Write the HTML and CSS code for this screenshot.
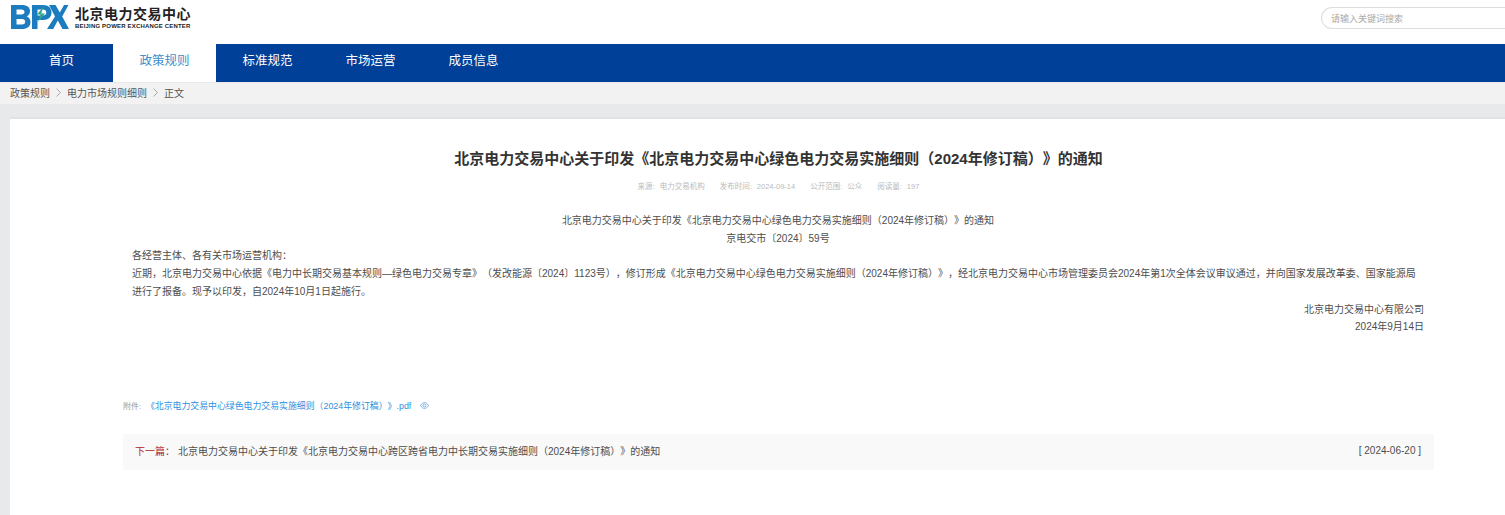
FILE: index.html
```html
<!DOCTYPE html>
<html lang="zh">
<head>
<meta charset="utf-8">
<title>北京电力交易中心</title>
<link rel="stylesheet" href="styles.css">
</head>
<body>
<header class="top">
  <div class="logo">
    <svg class="mark" width="59" height="24" viewBox="0 0 59 24">
      <path fill="#1b7cc0" fill-rule="evenodd" d="M1 0h11c5 0 8 2.300 8 6 0 2.400-1.100 4.300-3.300 5.300C19 12.300 20.500 14.500 20.500 17c0 4.400-3.500 7-8.500 7H1zM6.500 4.500v5h5c1.800 0 3-.9 3-2.500s-1.200-2.500-3-2.500zM6.500 14v5.500H12c2 0 3.200-1 3.200-2.800S14 14 12 14z"/>
      <path fill="#1b7cc0" fill-rule="evenodd" d="M22 0h11c5.500 0 8.500 3 8.500 7.500S38.500 15 33 15h-5.500v9H22zM27.500 4.500v6H33c2.200 0 3.300-1.200 3.300-3s-1.100-3-3.300-3z"/>
      <path fill="#2fa88a" d="M33.500 1.500l-6.500 8h3.500L28 17l7-8.500h-3.800z"/>
      <path fill="#1b7cc0" d="M39 0h6.500l4.300 7.500L54 0h4.500l-6.300 11.500L59 24h-6.500l-4.700-8.500-4.600 8.500H37l8-12.500z"/>
    </svg>
    <div class="brand">
      <div class="brand-cn">北京电力交易中心</div>
      <div class="brand-en">BEIJING POWER EXCHANGE CENTER</div>
    </div>
  </div>
  <div class="search">请输入关键词搜索</div>
</header>
<nav class="nav">
  <a class="nav-item">首页</a>
  <a class="nav-item active">政策规则</a>
  <a class="nav-item">标准规范</a>
  <a class="nav-item">市场运营</a>
  <a class="nav-item">成员信息</a>
</nav>
<div class="crumbs">
  <span>政策规则</span>
  <svg class="sep" width="5" height="9" viewBox="0 0 5 9"><path fill="none" stroke="#aaa" d="M.5.5l4 4-4 4"/></svg>
  <span>电力市场规则细则</span>
  <svg class="sep" width="5" height="9" viewBox="0 0 5 9"><path fill="none" stroke="#aaa" d="M.5.5l4 4-4 4"/></svg>
  <span>正文</span>
</div>
<main class="panel">
  <h1 class="title">北京电力交易中心关于印发《北京电力交易中心绿色电力交易实施细则（2024年修订稿）》的通知</h1>
  <div class="meta">
    <span class="meta-item"><span>来源:</span><span>电力交易机构</span></span>
    <span class="meta-item"><span>发布时间:</span><span>2024-09-14</span></span>
    <span class="meta-item"><span>公开范围:</span><span>公众</span></span>
    <span class="meta-item"><span>阅读量:</span><span>197</span></span>
  </div>
  <article class="body">
    <p class="center">北京电力交易中心关于印发《北京电力交易中心绿色电力交易实施细则（2024年修订稿）》的通知</p>
    <p class="center">京电交市〔2024〕59号</p>
    <p>各经营主体、各有关市场运营机构：</p>
    <p>近期，北京电力交易中心依据《电力中长期交易基本规则—绿色电力交易专章》（发改能源〔2024〕1123号），修订形成《北京电力交易中心绿色电力交易实施细则（2024年修订稿）》，经北京电力交易中心市场管理委员会2024年第1次全体会议审议通过，并向国家发展改革委、国家能源局进行了报备。现予以印发，自2024年10月1日起施行。</p>
    <p class="right">北京电力交易中心有限公司</p>
    <p class="right">2024年9月14日</p>
  </article>
  <div class="attach">
    <span class="attach-label">附件:</span>
    <a class="attach-link">《北京电力交易中心绿色电力交易实施细则（2024年修订稿）》.pdf</a>
    <svg class="eye" width="9" height="7" viewBox="0 0 9 7"><path fill="none" stroke="#5a9fd8" stroke-width=".8" d="M.5 3.500C2 1.200 3.200.6 4.500.6S7 1.200 8.500 3.500C7 5.800 5.800 6.400 4.500 6.400S2 5.800.5 3.500z"/><circle cx="4.500" cy="3.500" r="1.400" fill="none" stroke="#5a9fd8" stroke-width=".8"/></svg>
  </div>
  <div class="next">
    <span class="next-label">下一篇：</span>
    <a class="next-link">北京电力交易中心关于印发《北京电力交易中心跨区跨省电力中长期交易实施细则（2024年修订稿）》的通知</a>
    <span class="next-date">[ 2024-06-20 ]</span>
  </div>
</main>
</body>
</html>
```

FILE: styles.css
```css
* { box-sizing: border-box; }
html, body { margin: 0; height: 100%; }
body {
  background: #e7e9eb;
  color: #333;
  font-family: "Liberation Sans", "Noto Sans CJK SC", sans-serif;
  font-size: 10px;
  text-spacing-trim: space-all;
  overflow: hidden;
}
.top {
  height: 44px;
  background: #fff;
  display: flex;
  align-items: flex-start;
  justify-content: space-between;
}
.logo { display: flex; align-items: flex-start; padding: 5px 0 0 10px; }
.mark { display: block; }
.brand { margin-left: 6px; padding-top: 1px; }
.brand-cn { font-size: 14px; line-height: 16px; font-weight: 700; color: #222; letter-spacing: .5px; white-space: nowrap; }
.brand-en { font-size: 6px; line-height: 8px; font-weight: 700; color: #222; letter-spacing: .18px; white-space: nowrap; }
.search {
  width: 184px;
  height: 22px;
  margin-top: 7px;
  padding-left: 9px;
  border: 1px solid #ddd;
  border-right: 0;
  border-radius: 11px 0 0 11px;
  color: #aaa;
  font-size: 9px;
  line-height: 22px;
}
.nav {
  height: 38px;
  background: #004098;
  display: flex;
  padding-left: 10px;
}
.nav-item {
  width: 103px;
  color: #fff;
  font-size: 12.5px;
  line-height: 34px;
  text-align: center;
}
.nav-item.active { background: #fff; color: #3f8fc8; }
.crumbs {
  height: 22px;
  background: #f2f2f3;
  border-top: 1px solid #e8e8e8;
  padding: 0 0 2px 10px;
  display: flex;
  align-items: center;
  gap: 6px;
  color: #555;
  font-size: 10px;
}
.sep { display: block; }
.panel {
  margin: 13px 0 0 10px;
  background: #fff;
  border-top: 2px solid #e0e3e6;
  height: 398px;
  padding: 0 71px 0 113px;
}
.title {
  margin: 0;
  padding-top: 29px;
  font-size: 15px;
  line-height: 22px;
  font-weight: 700;
  color: #333;
  text-align: center;
}
.meta {
  display: flex;
  justify-content: center;
  gap: 15px;
  margin-top: 11px;
  color: #bbb;
  font-size: 7.5px;
  line-height: 12px;
}
.meta-item { display: flex; gap: 5px; }
.body { margin-top: 19px; padding: 0 10px 0 9px; font-size: 10px; line-height: 17.7px; color: #4d4d4d; }
.body p { margin: 0; }
.center { text-align: center; }
.right { text-align: right; }
.attach { display: flex; align-items: center; margin-top: 63px; height: 14px; font-size: 8.9px; color: #999; }
.attach-label { width: 23px; font-size: 8px; }
.attach-link { color: #2f8fe0; }
.eye { margin-left: 9px; }
.next {
  display: flex;
  align-items: center;
  height: 36px;
  margin-top: 21px;
  padding: 0 13px 2px 12px;
  background: #f9f9f9;
  font-size: 10px;
  color: #4d4d4d;
}
.next-label { color: #b22222; width: 43px; }
.next-date { margin-left: auto; }
```
